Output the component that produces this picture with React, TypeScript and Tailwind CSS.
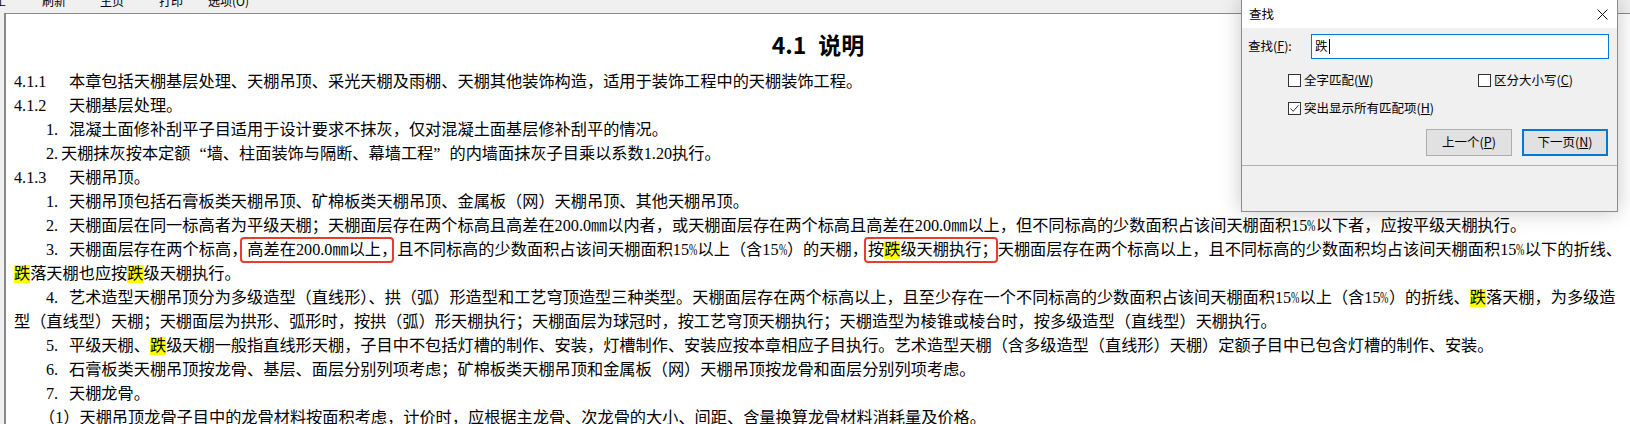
import React from "react";

function Hl({ children }: { children: React.ReactNode }) {
  return <span className="bg-[#ffff00]">{children}</span>;
}

function Num({ n, tight }: { n: string; tight?: boolean }) {
  return <span className={tight ? "inline-block w-[15px]" : "inline-block w-[23px]"}>{n}</span>;
}

function Sec({ n }: { n: string }) {
  return <span className="inline-block w-[55px]">{n}</span>;
}

// half-width percent sign, like the SimSun original
function Pct() {
  return <span className="inline-block w-[8.4px] scale-x-[0.62] origin-left">%</span>;
}

function Check({ checked }: { checked?: boolean }) {
  return (
    <span className="w-[13px] h-[13px] border border-[#333333] bg-white flex items-center justify-center shrink-0">
      {checked && (
        <svg width="11" height="11" viewBox="0 0 11 11">
          <path d="M1.5 5.5 L4.2 8.3 L9.5 2.2" fill="none" stroke="#333333" strokeWidth="1" />
        </svg>
      )}
    </span>
  );
}

function FindDialog() {
  return (
    <div className="absolute left-[1241px] top-0 w-[377px] h-[212px] border border-t-0 border-[#8c8c8c] bg-[#f0f0f0] shadow-[0_0_20px_rgba(0,0,0,0.22)] text-[12.5px] text-black flex flex-col">
      <div className="h-[28px] bg-white flex items-center justify-between pl-[7px] pr-[9px] leading-none">
        <span>查找</span>
        <svg width="11" height="11" viewBox="0 0 11 11">
          <path d="M0.5 0.5 L10.5 10.5 M10.5 0.5 L0.5 10.5" stroke="#111111" strokeWidth="1" />
        </svg>
      </div>
      <div className="mt-[6px] flex items-center h-[25px]">
        <span className="w-[69px] pl-[6px]">
          查找(<span className="underline">F</span>):
        </span>
        <div className="w-[298px] h-[25px] border border-[#0078d7] bg-white flex items-center pl-[3px]">
          <span>跌</span>
          <span className="w-px h-[15px] bg-black ml-[1px]" />
        </div>
      </div>
      <div className="mt-[15px] h-[13px] flex items-center pl-[46px]">
        <div className="w-[190px] flex items-center gap-[3px]">
          <Check />
          <span>
            全字匹配(<span className="underline">W</span>)
          </span>
        </div>
        <div className="flex items-center gap-[3px]">
          <Check />
          <span>
            区分大小写(<span className="underline">C</span>)
          </span>
        </div>
      </div>
      <div className="mt-[15px] h-[13px] flex items-center pl-[46px] gap-[3px]">
        <Check checked />
        <span>
          突出显示所有匹配项(<span className="underline">H</span>)
        </span>
      </div>
      <div className="mt-[14px] flex justify-end gap-[10px] pr-[9px]">
        <button className="w-[86px] h-[27px] bg-[#e1e1e1] border border-[#adadad] flex items-center justify-center">
          上一个(<span className="underline">P</span>)
        </button>
        <button className="w-[86px] h-[27px] bg-[#e1e1e1] border-2 border-[#0078d7] flex items-center justify-center">
          下一页(<span className="underline">N</span>)
        </button>
      </div>
      <div className="mt-[9px] border-t border-[#b0b0b0]" />
    </div>
  );
}

export default function App() {
  return (
    <div className="relative w-[1630px] h-[424px] overflow-hidden bg-[#f0f0f0] font-['Noto_Sans_CJK_SC',sans-serif] text-black flex flex-col">
      <div className="h-[13px] overflow-hidden shrink-0">
        <div className="-mt-[5px] flex text-[12px] leading-[12px] whitespace-nowrap">
          <span className="-ml-[18px]">停止</span>
          <span className="ml-[36px]">刷新</span>
          <span className="ml-[34px]">主页</span>
          <span className="ml-[35px]">打印</span>
          <span className="ml-[25px]">选项(O)</span>
        </div>
      </div>
      <div className="flex-1 ml-[4px] border-t border-l-2 border-[#8a8a8a] bg-white">
        <div className="pt-[15px] h-[30px] box-content text-center text-[23px] leading-[30px] font-bold">
          4.1<span className="ml-[12px]">说明</span>
        </div>
        <div className="mt-[11px] pl-[8px] pr-[8px] text-[16.2px] leading-[24px] whitespace-nowrap font-['Liberation_Serif','Noto_Sans_CJK_SC',serif]">
          <div>
            <Sec n="4.1.1" />本章包括天棚基层处理、天棚吊顶、采光天棚及雨棚、天棚其他装饰构造，适用于装饰工程中的天棚装饰工程。
          </div>
          <div>
            <Sec n="4.1.2" />天棚基层处理。
          </div>
          <div className="pl-[32px]">
            <Num n="1." />混凝土面修补刮平子目适用于设计要求不抹灰，仅对混凝土面基层修补刮平的情况。
          </div>
          <div className="pl-[32px]">
            <Num n="2." tight />天棚抹灰按本定额<span className="inline-block w-[16.2px] text-right">“</span>墙、柱面装饰与隔断、幕墙工程<span className="inline-block w-[16.2px]">”</span>的内墙面抹灰子目乘以系数1.20执行。
          </div>
          <div>
            <Sec n="4.1.3" />天棚吊顶。
          </div>
          <div className="pl-[32px]">
            <Num n="1." />天棚吊顶包括石膏板类天棚吊顶、矿棉板类天棚吊顶、金属板（网）天棚吊顶、其他天棚吊顶。
          </div>
          <div className="pl-[32px]">
            <Num n="2." />天棚面层在同一标高者为平级天棚；天棚面层存在两个标高且高差在200.0㎜以内者，或天棚面层存在两个标高且高差在200.0㎜以上，但不同标高的少数面积占该间天棚面积15<Pct />以下者，应按平级天棚执行。
          </div>
          <div className="pl-[32px] whitespace-normal text-justify [text-align-last:justify]">
            <Num n="3." />天棚面层存在两个标高，
            <span className="relative">
              高差在200.0㎜以上，
              <span className="absolute -left-[7px] right-[3px] -top-[4px] -bottom-[4px] border-2 border-[#ec3a33] rounded-[4px]" />
            </span>
            且不同标高的少数面积占该间天棚面积15<Pct />以上（含15<Pct />）的天棚，
            <span className="relative">
              按<Hl>跌</Hl>级天棚执行；
              <span className="absolute -left-[4px] right-0 -top-[4px] -bottom-[4px] border-2 border-[#ec3a33] rounded-[4px]" />
            </span>
            天棚面层存在两个标高以上，且不同标高的少数面积均占该间天棚面积15<Pct />以下的折线、
          </div>
          <div>
            <Hl>跌</Hl>落天棚也应按<Hl>跌</Hl>级天棚执行。
          </div>
          <div className="pl-[32px]">
            <Num n="4." />艺术造型天棚吊顶分为多级造型（直线形）、拱（弧）形造型和工艺穹顶造型三种类型。天棚面层存在两个标高以上，且至少存在一个不同标高的少数面积占该间天棚面积15<Pct />以上（含15<Pct />）的折线、<Hl>跌</Hl>落天棚，为多级造
          </div>
          <div>型（直线型）天棚；天棚面层为拱形、弧形时，按拱（弧）形天棚执行；天棚面层为球冠时，按工艺穹顶天棚执行；天棚造型为棱锥或棱台时，按多级造型（直线型）天棚执行。</div>
          <div className="pl-[32px]">
            <Num n="5." />平级天棚、<Hl>跌</Hl>级天棚一般指直线形天棚，子目中不包括灯槽的制作、安装，灯槽制作、安装应按本章相应子目执行。艺术造型天棚（含多级造型（直线形）天棚）定额子目中已包含灯槽的制作、安装。
          </div>
          <div className="pl-[32px]">
            <Num n="6." />石膏板类天棚吊顶按龙骨、基层、面层分别列项考虑；矿棉板类天棚吊顶和金属板（网）天棚吊顶按龙骨和面层分别列项考虑。
          </div>
          <div className="pl-[32px]">
            <Num n="7." />天棚龙骨。
          </div>
          <div className="pl-[25px]">（1）天棚吊顶龙骨子目中的龙骨材料按面积考虑，计价时，应根据主龙骨、次龙骨的大小、间距、含量换算龙骨材料消耗量及价格。</div>
        </div>
      </div>
      <FindDialog />
    </div>
  );
}
